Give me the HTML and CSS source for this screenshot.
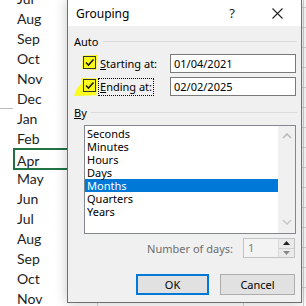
FILE: index.html
```html
<!DOCTYPE html>
<html>
<head>
<meta charset="utf-8">
<link rel="stylesheet" href="styles.css">
</head>
<body>
<div class="sheet">
  <div class="col-a">
    <div class="row"><span class="gut"></span><span class="cell">Jul</span></div>
    <div class="row"><span class="gut"></span><span class="cell">Aug</span></div>
    <div class="row"><span class="gut"></span><span class="cell">Sep</span></div>
    <div class="row"><span class="gut"></span><span class="cell">Oct</span></div>
    <div class="row"><span class="gut"></span><span class="cell">Nov</span></div>
    <div class="row"><span class="gut line"></span><span class="cell">Dec</span></div>
    <div class="row"><span class="gut"></span><span class="cell">Jan</span></div>
    <div class="row"><span class="gut"></span><span class="cell">Feb</span></div>
    <div class="row"><span class="gut"></span><span class="cell sel">Apr</span></div>
    <div class="row"><span class="gut"></span><span class="cell">May</span></div>
    <div class="row"><span class="gut"></span><span class="cell">Jun</span></div>
    <div class="row"><span class="gut"></span><span class="cell">Jul</span></div>
    <div class="row"><span class="gut"></span><span class="cell">Aug</span></div>
    <div class="row"><span class="gut"></span><span class="cell">Sep</span></div>
    <div class="row"><span class="gut"></span><span class="cell">Oct</span></div>
    <div class="row"><span class="gut"></span><span class="cell">Nov</span></div>
  </div>
  <div class="col-a2"></div>
  <div class="col-b"></div>
  <div class="col-c"></div>
  <div class="col-d"></div>
</div>

<div class="dialog">
  <div class="titlebar">
    <span class="title">Grouping</span>
    <span class="help">?</span>
    <svg class="close" width="11" height="11" viewBox="0 0 11 11"><path d="M0.5 0.5 L10.5 10.5 M10.5 0.5 L0.5 10.5" stroke="#222" stroke-width="1.1" fill="none"/></svg>
  </div>
  <div class="body">
    <div class="group-label"><span>Auto</span><span class="rule"></span></div>
    <div class="field first">
      <span class="hl hl1"></span>
      <span class="check"><svg width="11" height="11" viewBox="0 0 11 11"><path d="M2 5.5 L4.5 8 L9.5 2.5" stroke="#1a1a1a" stroke-width="1.6" fill="none"/></svg></span>
      <span class="flabel"><u>S</u>tarting at:</span>
      <span class="input">01/04/2021</span>
    </div>
    <div class="field second">
      <span class="hl hl2"></span>
      <span class="check"><svg width="11" height="11" viewBox="0 0 11 11"><path d="M2 5.5 L4.5 8 L9.5 2.5" stroke="#1a1a1a" stroke-width="1.6" fill="none"/></svg></span>
      <span class="flabel focus"><u>E</u>nding at:</span>
      <span class="input">02/02/2025</span>
    </div>
    <div class="group-label by"><span><u>B</u>y</span><span class="rule"></span></div>
    <div class="listbox">
      <div class="items">
        <div class="item">Seconds</div>
        <div class="item">Minutes</div>
        <div class="item">Hours</div>
        <div class="item">Days</div>
        <div class="item selected">Months</div>
        <div class="item">Quarters</div>
        <div class="item">Years</div>
      </div>
      <div class="scrollbar">
        <svg width="10" height="6" viewBox="0 0 10 6"><path d="M1 5 L5 1 L9 5" stroke="#b9b9b9" stroke-width="1.6" fill="none"/></svg>
        <svg width="10" height="6" viewBox="0 0 10 6"><path d="M1 1 L5 5 L9 1" stroke="#c8c8c8" stroke-width="1.6" fill="none"/></svg>
      </div>
    </div>
    <div class="days">
      <span class="days-label">Number of days:</span>
      <span class="spin">
        <span class="spin-val">1</span>
        <span class="spin-btns">
          <span class="sb"><svg width="7" height="4" viewBox="0 0 7 4"><path d="M0 4 L3.5 0 L7 4 Z" fill="#222"/></svg></span>
          <span class="sb"><svg width="7" height="4" viewBox="0 0 7 4"><path d="M0 0 L3.5 4 L7 0 Z" fill="#8a8a8a"/></svg></span>
        </span>
      </span>
    </div>
    <div class="buttons">
      <span class="btn ok">OK</span>
      <span class="btn cancel">Cancel</span>
    </div>
  </div>
</div>
</body>
</html>
```

FILE: styles.css
```css
html, body {
  margin: 0;
  padding: 0;
  width: 306px;
  height: 306px;
  overflow: hidden;
  background: #ffffff;
}

.sheet {
  display: flex;
  width: 306px;
  height: 306px;
}

.col-a {
  width: 67px;
  flex: none;
  margin-top: -11px;
  display: flex;
  flex-direction: column;
  font-family: Lato, "Open Sans", sans-serif;
  font-size: 14px;
  color: #1e1e1e;
}

.col-a2 {
  width: 30px;
  flex: none;
}

.row {
  display: flex;
  height: 20px;
}

.gut {
  width: 13px;
  flex: none;
  height: 20px;
  box-sizing: border-box;
}

.gut.line {
  border-bottom: 1px solid #bdbdbd;
}

.cell {
  flex: 1;
  height: 20px;
  line-height: 20px;
  padding-left: 4px;
  box-sizing: border-box;
}

.cell.sel {
  flex: none;
  width: 54px;
  height: 22px;
  line-height: 22px;
  margin-top: -1px;
  margin-bottom: -1px;
  border: 2px solid #217346;
  border-right: none;
  padding-left: 2px;
}

.col-b, .col-c, .col-d {
  height: 306px;
  border-left: 1px solid #d4d4d4;
  background: repeating-linear-gradient(to bottom, transparent 0, transparent 7px, #d4d4d4 7px, #d4d4d4 8px, transparent 8px, transparent 20px);
}

.col-b { width: 145px; flex: none; }
.col-c { width: 59px; flex: none; }
.col-d { flex: 1; }

.dialog {
  position: absolute;
  left: 67px;
  top: -1px;
  width: 235px;
  height: 304px;
  box-sizing: border-box;
  border: 1px solid #6f6f6f;
  background: #f0f0f0;
  box-shadow: 0 0 12px rgba(0, 0, 0, 0.22);
  font-family: "Noto Sans", sans-serif;
  font-size: 11px;
  color: #000;
  display: flex;
  flex-direction: column;
}

.titlebar {
  height: 26px;
  background: #ffffff;
  display: flex;
  align-items: center;
  padding: 0 0 0 8px;
  flex: none;
}

.title {
  font-size: 12px;
  color: #000;
  flex: 1;
  margin-top: 1px;
}

.help {
  font-size: 13px;
  width: 12px;
  text-align: center;
  margin-right: 34px;
  color: #222;
}

.close {
  margin-right: 18px;
}

.body {
  position: relative;
  padding: 8px 5px 0 6px;
  display: flex;
  flex-direction: column;
}

.group-label {
  display: flex;
  align-items: center;
  height: 14px;
  gap: 5px;
  margin-right: -1px;
}

.group-label .rule {
  flex: 1;
  height: 1px;
  background: #dcdcdc;
}

.group-label.by {
  margin-top: 9px;
  gap: 4px;
}

.field {
  position: relative;
  display: flex;
  align-items: center;
  height: 19px;
  padding-left: 9px;
}

.field.first { margin-top: 6px; }
.field.second { margin-top: 4px; }

.hl {
  position: absolute;
  background: #fbfb1e;
}

.hl1 {
  left: 8px;
  top: 1px;
  width: 15px;
  height: 15px;
  clip-path: polygon(6% 4%, 100% 0, 96% 100%, 0 92%);
}

.hl2 {
  left: 0;
  top: 1px;
  width: 23px;
  height: 18px;
  clip-path: polygon(34% 0, 100% 3%, 98% 96%, 0 100%, 12% 60%, 32% 30%);
}

.check {
  position: relative;
  width: 13px;
  height: 13px;
  box-sizing: border-box;
  border: 1px solid #333;
  display: flex;
  align-items: center;
  justify-content: center;
  margin-top: -2px;
}

.flabel {
  margin-left: 4px;
  line-height: 14px;
}

.flabel.focus {
  outline: 1px dotted #000;
  outline-offset: 1px;
}

.input {
  margin-left: auto;
  width: 126px;
  height: 19px;
  box-sizing: border-box;
  border: 1px solid #7a7a7a;
  background: #fff;
  padding-left: 3px;
  line-height: 17px;
  font-size: 11px;
}

.listbox {
  margin-top: 6px;
  margin-left: 10px;
  height: 109px;
  box-sizing: border-box;
  border: 1px solid #828790;
  background: #fff;
  display: flex;
}

.items {
  flex: 1;
  padding-top: 1px;
}

.item {
  height: 13px;
  line-height: 13px;
  padding-left: 2px;
  font-size: 11px;
}

.item.selected {
  background: #0078d7;
  color: #fff;
}

.scrollbar {
  width: 17px;
  background: #f0f0f0;
  display: flex;
  flex-direction: column;
  align-items: center;
  justify-content: space-between;
  padding: 7px 0 8px;
  box-sizing: border-box;
}

.days {
  margin-top: 4px;
  display: flex;
  align-items: center;
  justify-content: flex-end;
  height: 20px;
  padding-right: 1px;
}

.days-label {
  color: #6d6d6d;
}

.spin {
  margin-left: 10px;
  width: 52px;
  height: 20px;
  box-sizing: border-box;
  border: 1px solid #c3c3c3;
  background: #f3f3f3;
  display: flex;
}

.spin-val {
  flex: 1;
  color: #7a7a7a;
  padding-left: 4px;
  line-height: 17px;
}

.spin-btns {
  width: 15px;
  display: flex;
  flex-direction: column;
  border-left: 1px solid #dadada;
}

.sb {
  flex: 1;
  display: flex;
  align-items: center;
  justify-content: center;
  background: #eaeaea;
}

.sb + .sb {
  border-top: 1px solid #d0d0d0;
}

.buttons {
  margin-top: 16px;
  display: flex;
  justify-content: flex-end;
  gap: 11px;
  padding-right: 1px;
}

.btn {
  height: 21px;
  box-sizing: border-box;
  background: #e1e1e1;
  border: 1px solid #adadad;
  display: flex;
  align-items: center;
  justify-content: center;
  font-size: 11px;
}

.btn.ok {
  width: 73px;
  border: 2px solid #0078d7;
}

.btn.cancel {
  width: 75px;
}
```
